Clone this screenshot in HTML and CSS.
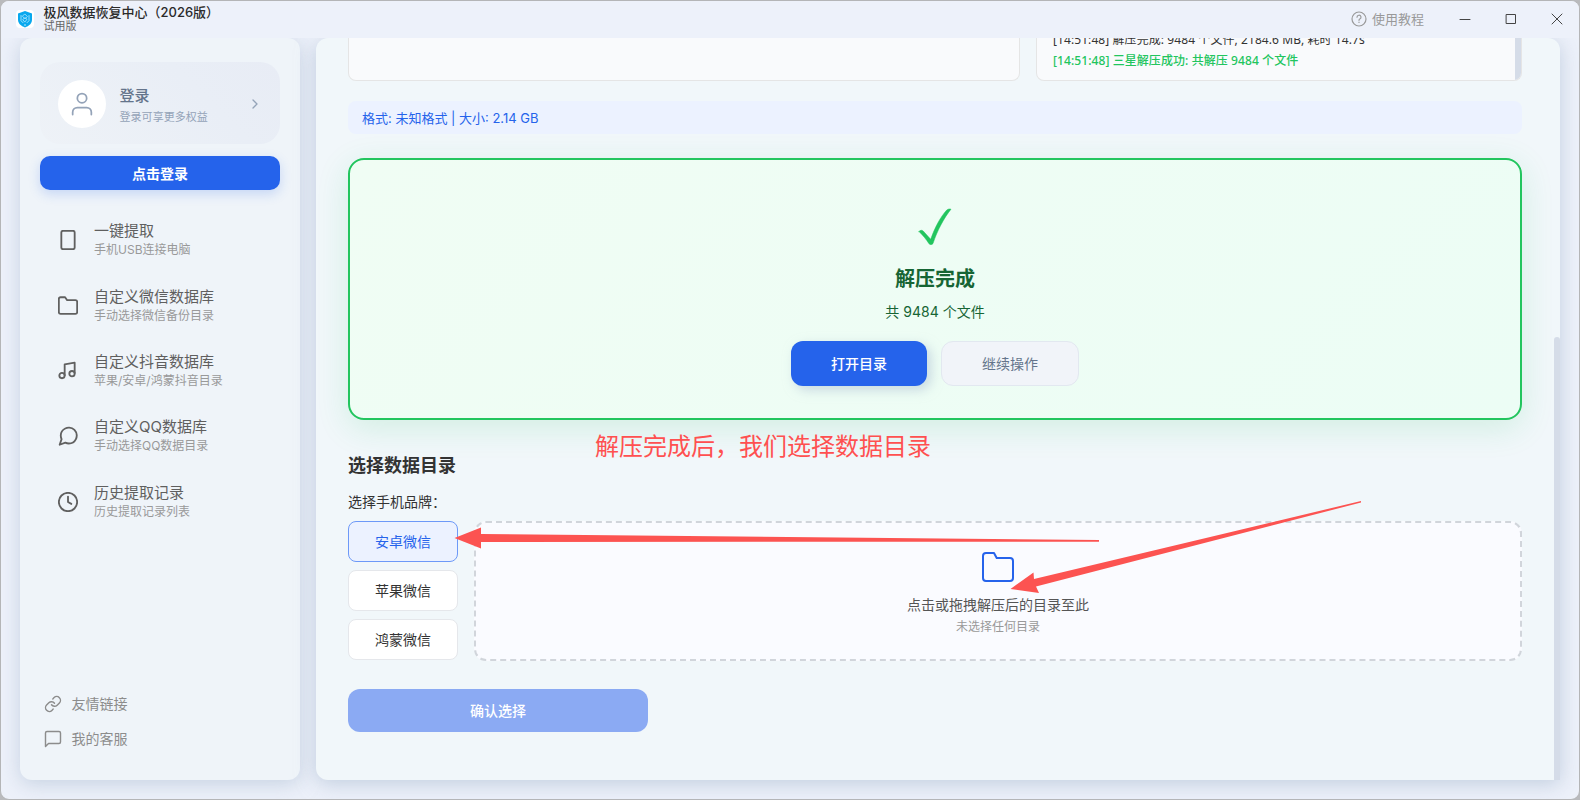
FILE: index.html
```html
<!DOCTYPE html>
<html lang="zh-CN">
<head>
<meta charset="utf-8">
<title>极风数据恢复中心</title>
<link rel="stylesheet" href="styles.css">
</head>
<body>
<div class="window">
  <header class="titlebar">
    <svg class="logo" viewBox="0 0 18 18"><rect width="18" height="18" rx="4" fill="#fff"/><path d="M9 1 L16 3.6 V9.5 C16 13.5 13 16 9 17.4 C5 16 2 13.5 2 9.5 V3.6 Z" fill="#08a8ee"/><path d="M5 5.5v5.2l2 2M13 5.5v5.2l-2 2M9 4.2l2.3 2.3L9 8.8 6.7 6.500zM7 9.300l2-1.600 2 1.600-2 2.500z" fill="none" stroke="#bdebff" stroke-width=".8"/><circle cx="9" cy="15" r=".7" fill="#fff"/></svg>
    <div class="titles"><div class="app-name">极风数据恢复中心（2026版）</div><div class="edition">试用版</div></div>
    <div class="help"><svg class="icon-help" viewBox="0 0 24 24"><circle cx="12" cy="12" r="10.500"/><path d="M9 9.300a3 3 0 1 1 4.200 2.800c-.8.400-1.200.9-1.200 1.900M12 16.800v.3"/></svg><span>使用教程</span></div>
    <div class="controls">
      <svg viewBox="0 0 12 12"><path d="M1 6.500h10"/></svg>
      <svg viewBox="0 0 12 12"><path d="M1.500 1.500h9v9h-9z"/></svg>
      <svg viewBox="0 0 12 12"><path d="M1 1l10 10M11 1L1 11"/></svg>
    </div>
  </header>
  <div class="body">
    <aside class="sidebar">
      <div class="user-card">
        <div class="avatar"><svg viewBox="0 0 24 24"><circle cx="12" cy="7" r="4"/><path d="M20 21v-2a4 4 0 0 0-4-4H8a4 4 0 0 0-4 4v2"/></svg></div>
        <div class="user-text"><div class="user-name">登录</div><div class="user-sub">登录可享更多权益</div></div>
        <svg class="chevron" viewBox="0 0 16 16"><path d="M6 4l4 4-4 4"/></svg>
      </div>
      <button class="login">点击登录</button>
      <nav class="nav">
        <div class="nav-item"><svg viewBox="0 0 24 24"><rect x="4" y="1" width="16" height="22" rx="2"/></svg><div><div class="nav-title">一键提取</div><div class="nav-sub">手机USB连接电脑</div></div></div>
        <div class="nav-item"><svg viewBox="0 0 24 24"><path d="M23 19.500a2 2 0 0 1-2 2H3a2 2 0 0 1-2-2v-16a2 2 0 0 1 2-2h5.500l2.500 3.500h10a2 2 0 0 1 2 2z"/></svg><div><div class="nav-title">自定义微信数据库</div><div class="nav-sub">手动选择微信备份目录</div></div></div>
        <div class="nav-item"><svg viewBox="0 0 24 24"><path d="M8 17V4l12-2v12.500"/><circle cx="4.800" cy="17.500" r="3.200"/><circle cx="16.800" cy="15.200" r="3.200"/></svg><div><div class="nav-title">自定义抖音数据库</div><div class="nav-sub">苹果/安卓/鸿蒙抖音目录</div></div></div>
        <div class="nav-item"><svg viewBox="0 0 24 24"><path d="M22.500 11.500a9.400 9.400 0 0 1-1 4.200 9.500 9.500 0 0 1-8.500 5.300 9.400 9.400 0 0 1-4.200-1L2 22.500l2.300-6.800a9.400 9.400 0 0 1-1-4.200A9.500 9.500 0 0 1 8.700 3 9.400 9.400 0 0 1 13 2h.5a9.500 9.500 0 0 1 9 9z"/></svg><div><div class="nav-title">自定义QQ数据库</div><div class="nav-sub">手动选择QQ数据目录</div></div></div>
        <div class="nav-item"><svg viewBox="0 0 24 24"><circle cx="12" cy="12" r="11"/><path d="M12 5.500V12l4 2.300"/></svg><div><div class="nav-title">历史提取记录</div><div class="nav-sub">历史提取记录列表</div></div></div>
      </nav>
      <div class="links">
        <div class="link"><svg viewBox="0 0 24 24"><path d="M10 13a5 5 0 0 0 7.540.54l3-3a5 5 0 0 0-7.070-7.070l-1.720 1.710"/><path d="M14 11a5 5 0 0 0-7.540-.54l-3 3a5 5 0 0 0 7.070 7.070l1.710-1.710"/></svg><span>友情链接</span></div>
        <div class="link"><svg viewBox="0 0 24 24"><path d="M22 16a2 2 0 0 1-2 2H6l-4 4V4a2 2 0 0 1 2-2h16a2 2 0 0 1 2 2z"/></svg><span>我的客服</span></div>
      </div>
    </aside>
    <main class="main">
      <div class="panels">
        <div class="panel"></div>
        <div class="panel log">
          <div class="log-line">[14:51:48] 解压完成: 9484 个文件, 2184.6 MB, 耗时 14.7s</div>
          <div class="log-line ok">[14:51:48] 三星解压成功: 共解压 9484 个文件</div>
          <div class="log-scroll"></div>
        </div>
      </div>
      <div class="info">格式: 未知格式 | 大小: 2.14 GB</div>
      <section class="result">
        <svg class="check" viewBox="0 0 34 38"><path d="M1 23.500 C2.200 22 4 21.800 5.200 23 L12.700 31.300 C17 19 22.500 9 28.500 2.300 C29.800 1 31.500 .7 33 1.200 C26 10 19.500 22 15 35.500 C14.200 37 11.700 37 10.800 35.500 C8 31 5 27.500 1 23.500 Z"/></svg>
        <h2 class="result-title">解压完成</h2>
        <p class="result-sub">共 9484 个文件</p>
        <div class="actions"><button class="btn primary">打开目录</button><button class="btn secondary">继续操作</button></div>
      </section>
      <h3 class="section-title">选择数据目录</h3>
      <div class="label">选择手机品牌：</div>
      <div class="chooser">
        <div class="brands"><button class="brand active">安卓微信</button><button class="brand">苹果微信</button><button class="brand">鸿蒙微信</button></div>
        <div class="drop">
          <svg viewBox="0 0 32 30"><path d="M31 26a3 3 0 0 1-3 3H4a3 3 0 0 1-3-3V4a3 3 0 0 1 3-3h8l2.700 5H28a3 3 0 0 1 3 3z"/></svg>
          <div class="drop-title">点击或拖拽解压后的目录至此</div>
          <div class="drop-sub">未选择任何目录</div>
        </div>
      </div>
      <button class="confirm">确认选择</button>
      <div class="page-scroll"></div>
    </main>
  </div>
  <div class="note">解压完成后，我们选择数据目录</div>
  <svg class="arrows" viewBox="0 0 1580 800"><path d="M454.500 538 L481 527.500 V534 L1099 540 V541.700 L481 542 V548.500 Z"/><path d="M1010.500 589 L1033.500 572.500 L1034 579 L1361 501 V502.500 L1036 586.500 L1039 593 Z"/></svg>
</div>
</body>
</html>
```
FILE: styles.css
```css
* { box-sizing: border-box; }
body { margin: 0; background: #b9babd; font-family: Inter, "Noto Sans CJK SC", sans-serif; color: #333; }
h2, h3, p { margin: 0; }
button { font-family: inherit; padding: 0; border: 0; }
svg { fill: none; stroke: currentColor; stroke-width: 2; stroke-linecap: round; stroke-linejoin: round; flex: none; }
.window { position: relative; width: 1580px; height: 800px; border: 1px solid #b4b5b7; border-radius: 9px; background: #edf1fa; overflow: hidden; display: flex; flex-direction: column; }
.titlebar { height: 37px; flex: none; display: flex; align-items: center; padding: 0 16px 1px 15px; background: #edf1fa; position: relative; z-index: 2; }
.logo { width: 18px; height: 18px; stroke: none; }
.titles { margin-left: 9.500px; height: 36px; padding-top: 3px; flex: 1; }
.app-name { font-size: 13px; line-height: 16px; font-weight: 500; color: #2a2a2a; }
.edition { font-size: 11px; line-height: 12px; color: #666; }
.help { display: flex; align-items: center; gap: 5px; font-size: 13px; color: #999; line-height: 18px; margin-right: 1px; }
.icon-help { width: 16px; height: 16px; stroke-width: 1.8; }
.controls { display: flex; gap: 34px; margin-left: 34px; color: #444; }
.controls svg { width: 12px; height: 12px; stroke-width: 1; }
.body { flex: 1; display: flex; gap: 16px; padding: 0 19px 19px; min-height: 0; }
.sidebar { width: 280px; border-radius: 12px; background: #eff4f9; box-shadow: 0 4px 20px #a3b5cc88; padding: 24px 20px 29px; display: flex; flex-direction: column; }
.user-card { height: 82px; border-radius: 20px; background: linear-gradient(45deg, #eef2f7, #e9eef6 65%, #e8ecf5); display: flex; align-items: center; padding: 1px 18px 0; flex: none; }
.avatar { width: 48px; height: 48px; border-radius: 50%; background: #fff; display: grid; place-items: center; color: #94a3b8; }
.avatar svg { width: 28px; height: 28px; stroke-width: 1.500; }
.user-text { margin-left: 13.500px; flex: 1; padding-top: 4px; }
.user-name { font-size: 15px; line-height: 20px; color: #64748b; font-weight: 500; }
.user-sub { font-size: 11px; line-height: 16px; margin-top: 3px; color: #94a3b8; letter-spacing: .05px; }
.chevron { width: 16px; height: 16px; color: #94a3b8; stroke-width: 1.300; margin-right: -1px; }
.login { margin-top: 12px; height: 34px; flex: none; border-radius: 10px; background: #2563eb; color: #fff; font-size: 14px; font-weight: 700; box-shadow: 0 4px 12px #2563eb35; }
.nav { margin-top: 19.500px; display: flex; flex-direction: column; gap: 4px; }
.nav-item { height: 61.400px; display: flex; align-items: center; gap: 16px; padding-left: 18px; color: #606060; }
.nav-item svg { width: 20px; height: 20px; stroke-width: 2.200; }
.nav-title { font-size: 15px; line-height: 20px; color: #5f5f5f; }
.nav-sub { font-size: 12px; line-height: 18px; color: #999; }
.links { margin-top: auto; padding-left: 4px; display: flex; flex-direction: column; gap: 11px; color: #8c8c8c; }
.link { display: flex; align-items: center; gap: 9.500px; font-size: 14px; line-height: 24px; }
.link svg { width: 18px; height: 18px; stroke-width: 1.900; }
.main { position: relative; flex: 1; border-radius: 12px 12px 4px 12px; background: #f1f7fa; box-shadow: 0 4px 20px #a3b5cc95; padding: 0 38px 0 32px; min-width: 0; }
.panels { height: 43px; display: flex; gap: 16px; }
.panel { width: 672px; border: 1px solid #e5e5e5; border-top: 0; border-radius: 0 0 8px 8px; background: #f9fafc; }
.log { position: relative; width: 486px; overflow: hidden; padding: 0 16px 9px; display: flex; flex-direction: column; justify-content: flex-end; font-family: "Noto Sans", "Noto Sans CJK SC", sans-serif; font-size: 12px; line-height: 21px; color: #333; letter-spacing: .08px; }
.log-line { flex: none; white-space: nowrap; }
.ok { color: #22c55e; font-weight: 500; }
.log-scroll { position: absolute; right: 0; top: 0; width: 6px; height: 42px; background: #d5dce8; }
.info { margin-top: 20px; height: 33px; border-radius: 8px; background: #ecf2ff; color: #2563eb; font-size: 13px; line-height: 34px; padding-left: 14px; }
.result { margin-top: 24px; height: 262px; border: 2px solid #22c55e; border-radius: 16px; background: linear-gradient(135deg, #f0fdf4, #ecfdf5); box-shadow: 0 8px 32px #22c55e26; display: flex; flex-direction: column; align-items: center; padding-top: 48px; }
.check { width: 34px; height: 38px; fill: #22c55e; stroke: #22c55e; stroke-width: .5; }
.result-title { margin-top: 18px; font-size: 20px; line-height: 30px; font-weight: 700; color: #166534; }
.result-sub { margin-top: 8px; font-size: 14px; line-height: 20px; color: #166534; }
.actions { margin-top: 19px; display: flex; gap: 14px; }
.btn { height: 45px; border-radius: 12px; font-size: 14px; padding-bottom: 2px; }
.primary { width: 136px; background: #2563eb; color: #fff; font-weight: 500; box-shadow: 4px 4px 12px #a5b9cf85; }
.secondary { width: 138px; background: #f1f4f9; color: #64748b; border: 1px solid #e2e8f0; }
.section-title { margin-top: 32px; font-size: 18px; line-height: 28px; font-weight: 700; }
.label { margin-top: 11px; font-size: 14px; line-height: 22px; }
.chooser { margin-top: 8px; display: flex; gap: 16px; }
.brands { width: 110px; display: flex; flex-direction: column; gap: 8px; }
.brand { height: 41px; border: 1px solid #e5e7eb; border-radius: 8px; background: #fff; color: #333; font-size: 14px; padding-bottom: 2px; }
.active { background: #ecf2ff; border-color: #6d99f8; color: #2563eb; }
.drop { flex: 1; height: 140px; border: 2px dashed #d1d5db; border-radius: 12px; background: #fafbff; display: flex; flex-direction: column; align-items: center; padding-top: 29px; }
.drop svg { width: 32px; height: 30px; color: #2563eb; }
.drop-title { margin-top: 12px; font-size: 14px; line-height: 22px; color: #555; }
.drop-sub { margin-top: 1px; font-size: 12px; line-height: 20px; color: #999; }
.confirm { display: block; margin-top: 28px; width: 300px; height: 43px; border-radius: 12px; background: #8baaf3; color: #fff; font-size: 14px; font-weight: 500; padding-bottom: 2px; }
.page-scroll { position: absolute; right: 0; bottom: 0; width: 6px; height: 443px; border-radius: 3px 3px 0 0; background: #d5dce8; }
.note { position: absolute; left: 594px; top: 428px; font-size: 24px; line-height: 36px; color: #ff5050; white-space: nowrap; }
.arrows { position: absolute; left: -1px; top: -1px; width: 1580px; height: 800px; fill: #fc5351; stroke: none; pointer-events: none; }
```
